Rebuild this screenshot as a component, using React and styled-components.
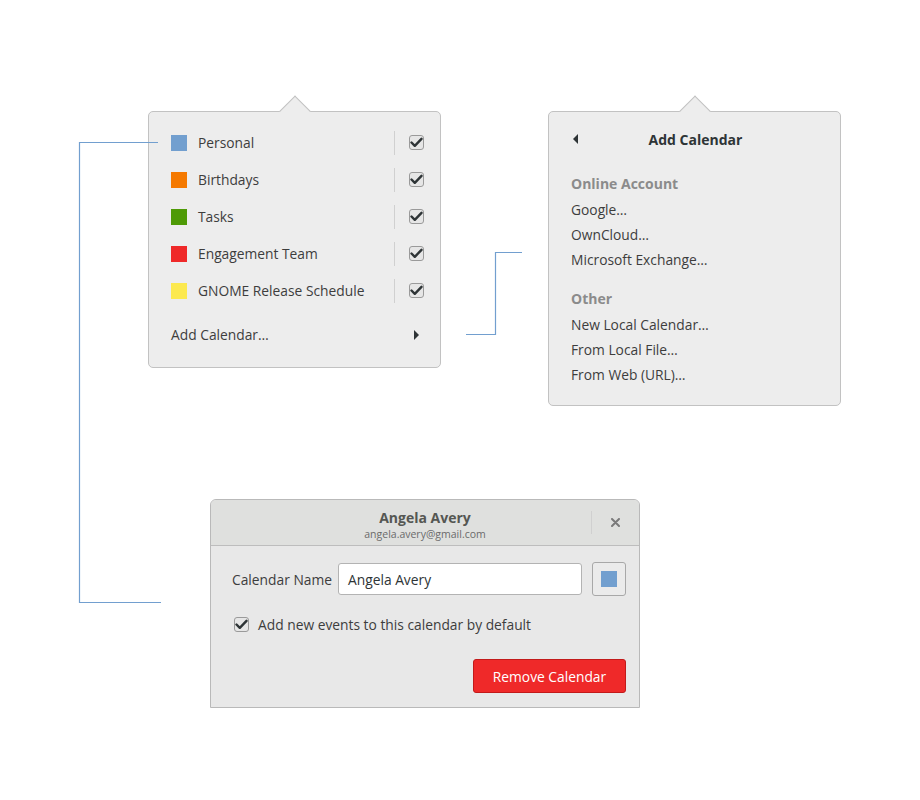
import styled, { createGlobalStyle } from 'styled-components';

const GlobalStyle = createGlobalStyle`
  html, body {
    margin: 0;
    padding: 0;
    background: #ffffff;
  }
  body {
    font-family: 'Open Sans', 'Noto Sans', sans-serif;
    color: #3d3d3d;
    -webkit-font-smoothing: antialiased;
  }
`;

const calendars = [
  { name: 'Personal', color: '#729fcf' },
  { name: 'Birthdays', color: '#f57900' },
  { name: 'Tasks', color: '#4e9a06' },
  { name: 'Engagement Team', color: '#ef2929' },
  { name: 'GNOME Release Schedule', color: '#fce94f' },
];

const sources = [
  { title: 'Online Account', items: ['Google…', 'OwnCloud…', 'Microsoft Exchange…'] },
  { title: 'Other', items: ['New Local Calendar…', 'From Local File…', 'From Web (URL)…'] },
];

const Canvas = styled.div`
  position: relative;
  width: 920px;
  height: 800px;
  overflow: hidden;
`;

// popovers and the dialog are nodes on the mockup canvas
const Popover = styled.div`
  position: absolute;
  left: ${p => p.x}px;
  top: ${p => p.y}px;
  width: ${p => p.w}px;
  height: ${p => p.h}px;
  box-sizing: border-box;
  background: #ededed;
  border: 1px solid #c2c2c2;
  border-radius: 5px;
  display: flex;
  flex-direction: column;
`;

const Arrow = styled.span`
  position: absolute;
  top: -12px;
  left: ${p => p.at}px;
  width: 22px;
  height: 22px;
  box-sizing: border-box;
  background: #ededed;
  border-top: 1px solid #c2c2c2;
  border-left: 1px solid #c2c2c2;
  transform: rotate(45deg);
`;

const CalendarList = styled.ul`
  list-style: none;
  margin: 0;
  padding: 12px 16px 0 22px;
`;

const CalendarRow = styled.li`
  height: 37px;
  display: flex;
  align-items: center;
`;

const Swatch = styled.span`
  width: 16px;
  height: 16px;
  flex: none;
  background: ${p => p.color};
`;

const RowLabel = styled.span`
  flex: 1;
  margin-left: 11px;
  font-size: 13.8px;
  color: #3d3d3d;
`;

const Separator = styled.span`
  width: 1px;
  height: ${p => p.h || 24}px;
  background: #d0d0d0;
  margin-right: ${p => p.gap || 14}px;
`;

const CheckBox = styled.span`
  width: 15px;
  height: 15px;
  box-sizing: border-box;
  flex: none;
  border: 1px solid #9a9a9a;
  border-radius: 3px;
  background: #e6e6e6;
  display: flex;
  align-items: center;
  justify-content: center;
`;

const AddRow = styled.div`
  height: 37px;
  margin-top: 7px;
  padding: 0 21px 0 22px;
  display: flex;
  align-items: center;
  justify-content: space-between;
  font-size: 13.8px;
  color: #3d3d3d;
`;

const Caret = styled.span`
  display: block;
  width: 0;
  height: 0;
  border-top: 5px solid transparent;
  border-bottom: 5px solid transparent;
  ${p => p.left ? 'border-right: 5px solid #2e3436;' : 'border-left: 5px solid #2e3436;'}
`;

const MenuHeader = styled.div`
  position: relative;
  height: 30px;
  margin: 12px 22px 0 24px;
  display: flex;
  align-items: center;
  justify-content: center;
`;

const BackButton = styled.span`
  position: absolute;
  left: 0;
  top: 10px;
`;

const MenuTitle = styled.span`
  font-size: 14px;
  font-weight: 700;
  color: #2e3436;
`;

const Section = styled.div`
  padding: 0 22px;
  margin-top: ${p => p.first ? 17 : 14}px;
  display: flex;
  flex-direction: column;
`;

const SectionTitle = styled.div`
  line-height: 25px;
  margin-bottom: 1px;
  font-size: 14px;
  font-weight: 700;
  color: #8b8b8b;
`;

const MenuItem = styled.div`
  line-height: 25px;
  font-size: 13.8px;
  color: #3d3d3d;
`;

const Dialog = styled.div`
  position: absolute;
  left: ${p => p.x}px;
  top: ${p => p.y}px;
  width: 430px;
  height: 209px;
  box-sizing: border-box;
  border: 1px solid #b9b9b9;
  border-radius: 6px 6px 0 0;
  background: #e8e8e8;
  display: flex;
  flex-direction: column;
`;

const HeaderBar = styled.div`
  height: 46px;
  flex: none;
  box-sizing: border-box;
  border-bottom: 1px solid #bdbdbd;
  border-radius: 5px 5px 0 0;
  background: #dfe0de;
  display: grid;
  grid-template-columns: 1fr auto 1fr;
  align-items: center;
`;

const TitleBlock = styled.div`
  grid-column: 2;
  display: flex;
  flex-direction: column;
  align-items: center;
  padding-top: 4px;
`;

const DialogTitle = styled.div`
  font-size: 14px;
  font-weight: 700;
  color: #555753;
  line-height: 18px;
`;

const DialogSubtitle = styled.div`
  font-size: 10.5px;
  color: #6b6b6b;
  line-height: 14px;
`;

const HeaderEnd = styled.div`
  grid-column: 3;
  justify-self: end;
  display: flex;
  align-items: center;
  padding-right: 19px;
`;

const DialogBody = styled.div`
  flex: 1;
  padding: 16px 13px 14px 21px;
  display: flex;
  flex-direction: column;
`;

const NameRow = styled.div`
  display: flex;
  align-items: center;
`;

const FieldLabel = styled.span`
  flex: none;
  white-space: nowrap;
  font-size: 13.8px;
  color: #3d3d3d;
  margin-right: 6px;
`;

const Entry = styled.div`
  width: 244px;
  height: 32px;
  flex: none;
  box-sizing: border-box;
  border: 1px solid #b3b3b3;
  border-radius: 3px;
  background: #ffffff;
  padding-left: 9px;
  display: flex;
  align-items: center;
  font-size: 13.8px;
  color: #2e3436;
`;

const ColorButton = styled.div`
  width: 34px;
  height: 34px;
  flex: none;
  margin-left: 10px;
  box-sizing: border-box;
  border: 1px solid #a8a8a8;
  border-radius: 3px;
  background: #ebebeb;
  display: flex;
  align-items: center;
  justify-content: center;
`;

const CheckRow = styled.label`
  height: 20px;
  margin-top: 18px;
  margin-left: 2px;
  display: flex;
  align-items: center;
  gap: 9px;
  font-size: 13.8px;
  color: #3d3d3d;
`;

const ButtonRow = styled.div`
  margin-top: auto;
  display: flex;
  justify-content: flex-end;
`;

const DestructiveButton = styled.div`
  width: 153px;
  height: 34px;
  box-sizing: border-box;
  border: 1px solid #c21a1a;
  border-radius: 3px;
  background: #ef2929;
  color: #ffffff;
  font-size: 13.8px;
  display: flex;
  align-items: center;
  justify-content: center;
`;

const Connectors = styled.svg`
  position: absolute;
  left: 0;
  top: 0;
  pointer-events: none;
`;

const Check = () => (
  <svg width="13" height="11" viewBox="0 0 13 11">
    <path d="M1.5 5.5 L4.8 8.8 L11.5 1.8" fill="none" stroke="#2e3436" strokeWidth="2.4" strokeLinecap="round" strokeLinejoin="round" />
  </svg>
);

const Close = () => (
  <svg width="9" height="9" viewBox="0 0 9 9">
    <path d="M1 1 L8 8 M8 1 L1 8" stroke="#7a7a7a" strokeWidth="2" strokeLinecap="round" />
  </svg>
);

export default function App() {
  return (
    <Canvas>
      <GlobalStyle />

      <Popover x={148} y={111} w={293} h={257}>
        <Arrow at={135} />
        <CalendarList>
          {calendars.map(c => (
            <CalendarRow key={c.name}>
              <Swatch color={c.color} />
              <RowLabel>{c.name}</RowLabel>
              <Separator />
              <CheckBox><Check /></CheckBox>
            </CalendarRow>
          ))}
        </CalendarList>
        <AddRow>
          <span>Add Calendar…</span>
          <Caret />
        </AddRow>
      </Popover>

      <Popover x={548} y={111} w={293} h={295}>
        <Arrow at={135} />
        <MenuHeader>
          <BackButton><Caret left /></BackButton>
          <MenuTitle>Add Calendar</MenuTitle>
        </MenuHeader>
        {sources.map((s, i) => (
          <Section key={s.title} first={i === 0}>
            <SectionTitle>{s.title}</SectionTitle>
            {s.items.map(item => <MenuItem key={item}>{item}</MenuItem>)}
          </Section>
        ))}
      </Popover>

      <Dialog x={210} y={499}>
        <HeaderBar>
          <TitleBlock>
            <DialogTitle>Angela Avery</DialogTitle>
            <DialogSubtitle>angela.avery@gmail.com</DialogSubtitle>
          </TitleBlock>
          <HeaderEnd>
            <Separator h={23} gap={19} />
            <Close />
          </HeaderEnd>
        </HeaderBar>
        <DialogBody>
          <NameRow>
            <FieldLabel>Calendar Name</FieldLabel>
            <Entry>Angela Avery</Entry>
            <ColorButton><Swatch color="#729fcf" /></ColorButton>
          </NameRow>
          <CheckRow>
            <CheckBox><Check /></CheckBox>
            Add new events to this calendar by default
          </CheckRow>
          <ButtonRow>
            <DestructiveButton>Remove Calendar</DestructiveButton>
          </ButtonRow>
        </DialogBody>
      </Dialog>

      <Connectors width="920" height="800">
        <path d="M158 142.5 H79.5 V602.5 H161" fill="none" stroke="#729fcf" strokeWidth="1.2" />
        <path d="M466 334.5 H495.5 V252.5 H522" fill="none" stroke="#729fcf" strokeWidth="1.2" />
      </Connectors>
    </Canvas>
  );
}
